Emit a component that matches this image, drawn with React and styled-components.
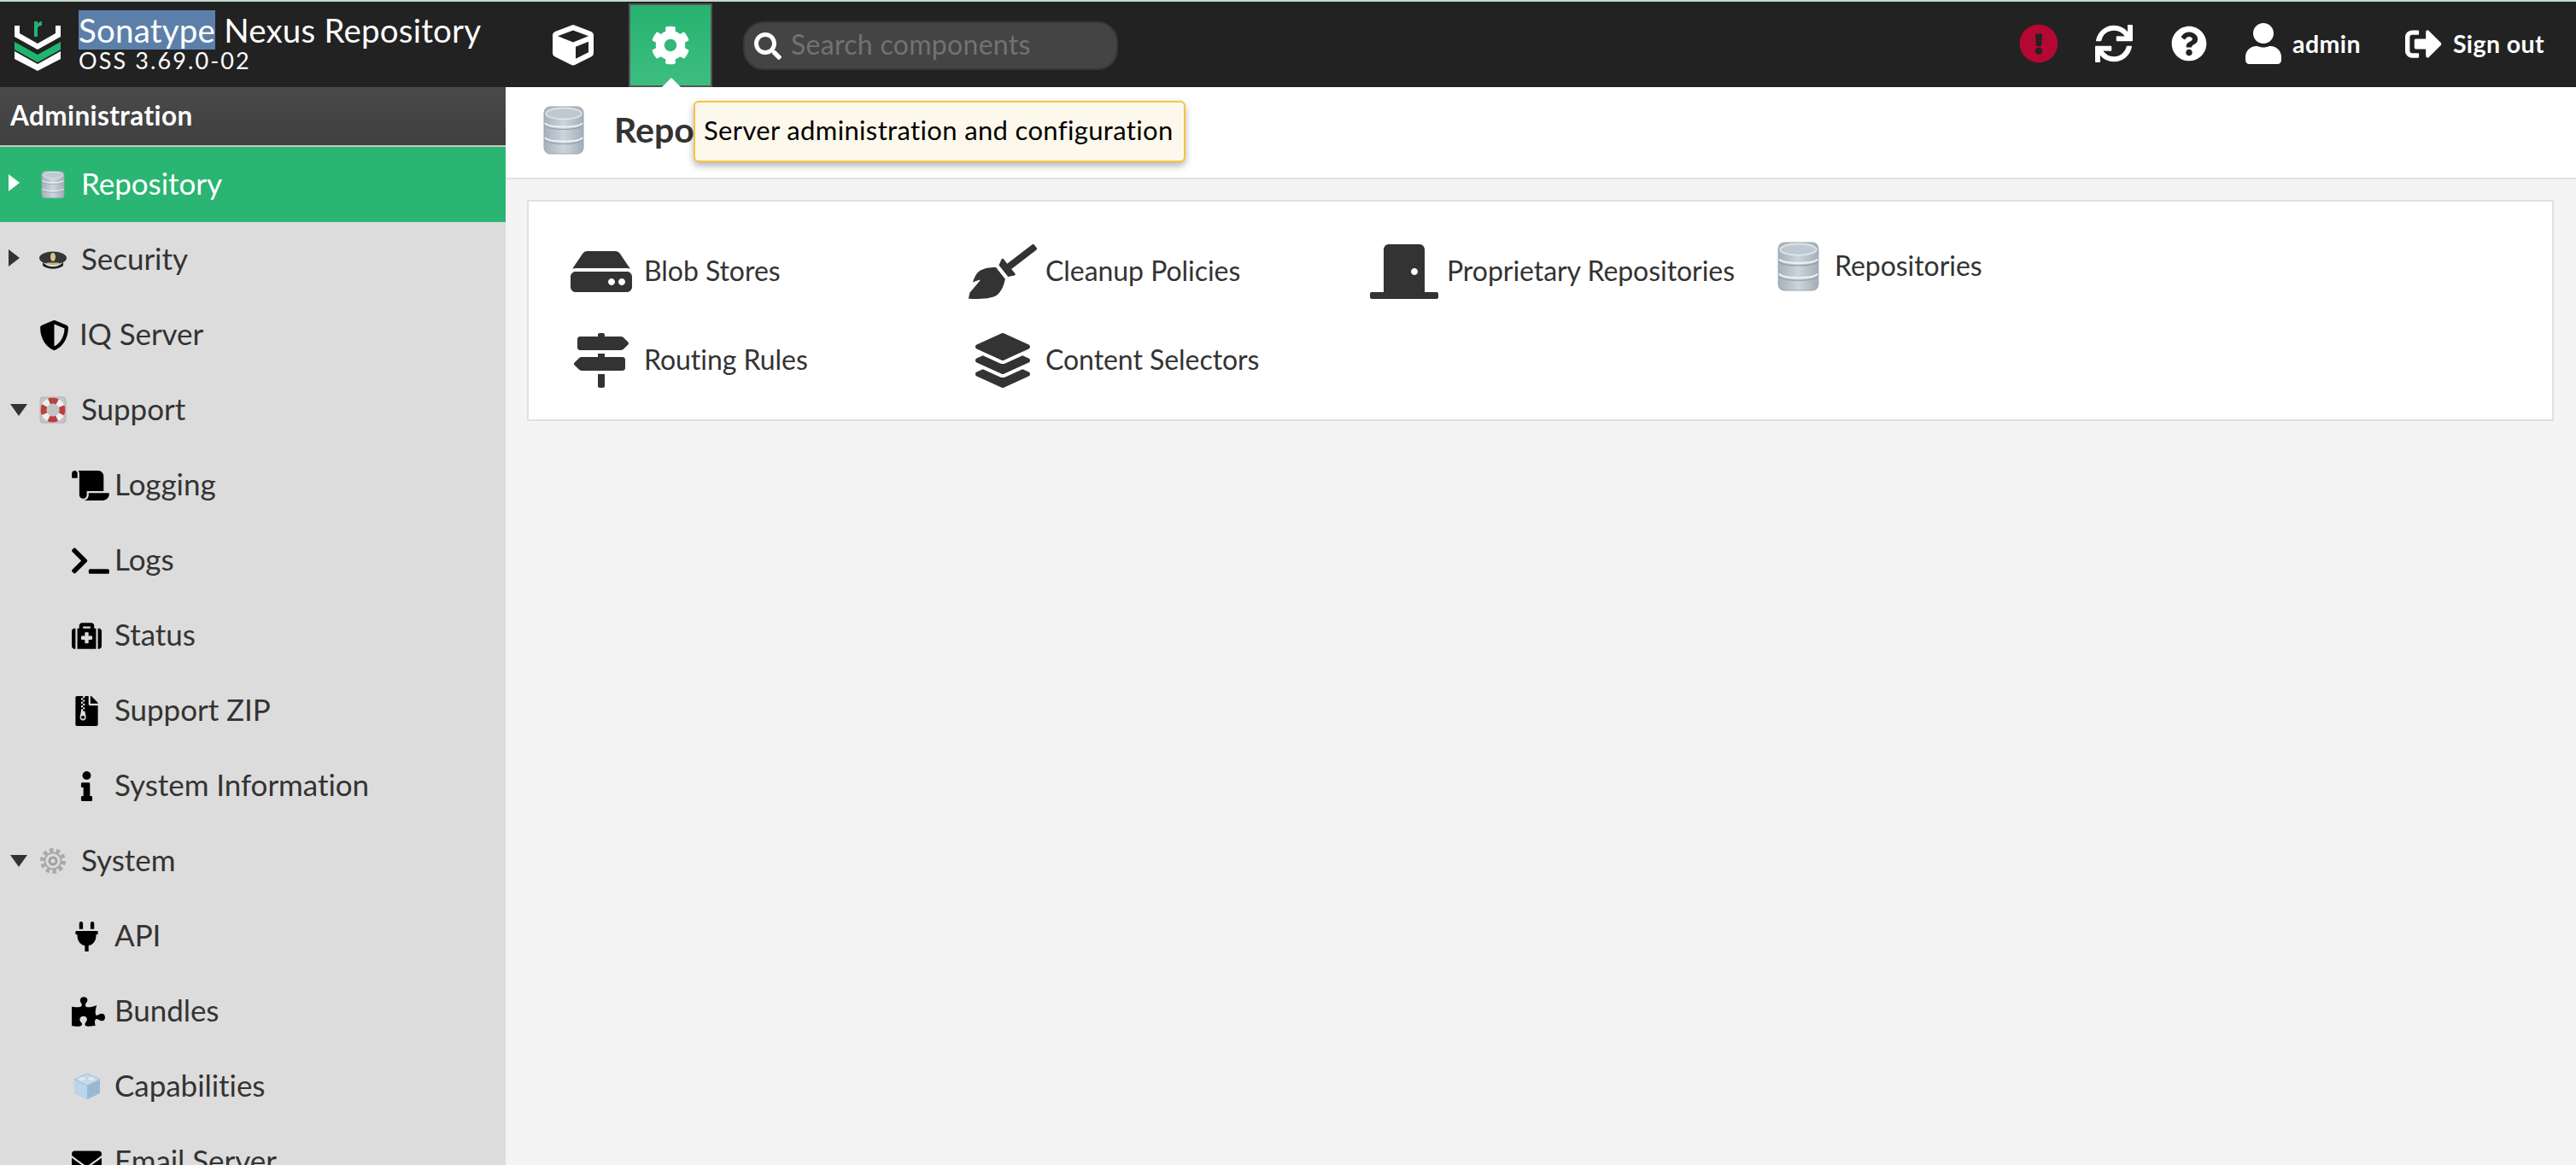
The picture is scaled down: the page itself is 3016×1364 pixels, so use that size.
import styled, { createGlobalStyle } from "styled-components";
import {
  FaBroom,
  FaCog,
  FaCube,
  FaDoorClosed,
  FaEnvelope,
  FaExclamationCircle,
  FaFileArchive,
  FaHdd,
  FaInfo,
  FaLayerGroup,
  FaMapSigns,
  FaMedkit,
  FaPlug,
  FaPuzzlePiece,
  FaQuestionCircle,
  FaScroll,
  FaSearch,
  FaShieldAlt,
  FaSignOutAlt,
  FaSync,
  FaTerminal,
  FaUser,
} from "react-icons/fa";

const GlobalStyle = createGlobalStyle`
  html, body {
    margin: 0;
    height: 100%;
    overflow: hidden;
    font-family: Lato, "Open Sans", sans-serif;
  }
  * {
    box-sizing: border-box;
  }
`;

const LogoMark = styled.svg`
  flex: none;
  margin-top: 4px;
`;

const Logo = () => (
  <LogoMark width="54" height="58" viewBox="0 0 54 58">
    <path fill="#fff" d="M0 5h6v9l21 12 21-12V5h6v13L27 33 0 18z" />
    <path fill="#1fb56f" d="M0 24l27 15 27-15v9L27 48 0 33z" />
    <path fill="#fff" d="M0 35l27 15 27-15v9L27 58 0 44z" />
    <path fill="#1fb56f" d="M23 0h4v3c1-2 3-3 5-3v5c-3 0-5 1-5 4v9h-4z" />
  </LogoMark>
);

const DbIcon = ({ width, height }) => (
  <svg width={width} height={height} viewBox="0 0 48 58">
    <defs>
      <linearGradient id="dbFill" x1="0" x2="1" y1="0" y2="0">
        <stop offset="0" stopColor="#a4b0bb" />
        <stop offset="0.5" stopColor="#ccd5dc" />
        <stop offset="1" stopColor="#a2aeb9" />
      </linearGradient>
    </defs>
    <rect x="1" y="1" width="46" height="55" rx="7" fill="url(#dbFill)" stroke="#9aa5ae" />
    <ellipse cx="24" cy="9" rx="21" ry="6.5" fill="#bfc9d2" stroke="#e4eaee" strokeWidth="1.5" />
    <path d="M2 20c4 6 40 6 44 0M2 37c4 6 40 6 44 0" fill="none" stroke="#eef2f5" strokeWidth="2" />
    <path d="M2 23c4 6 40 6 44 0M2 40c4 6 40 6 44 0" fill="none" stroke="#8f9ba6" strokeWidth="1" />
  </svg>
);

const CapIcon = () => (
  <svg width="32" height="24" viewBox="0 0 32 24">
    <ellipse cx="16" cy="10" rx="16" ry="7.5" fill="#35363a" />
    <path d="M4 15c6 7 18 7 24 0v4c-6 5-18 5-24 0z" fill="#1f2022" />
    <ellipse cx="16" cy="9" rx="3" ry="5" fill="#d8c58e" />
    <rect x="9" y="15.5" width="14" height="2" fill="#cdb673" />
  </svg>
);

const RingIcon = () => (
  <svg width="32" height="32" viewBox="0 0 32 32">
    <rect x="1" y="1" width="30" height="30" rx="3" fill="#c4c4c4" stroke="#b2b2b2" />
    <circle cx="16" cy="16" r="11" fill="none" stroke="#eee" strokeWidth="7" />
    <circle
      cx="16"
      cy="16"
      r="11"
      fill="none"
      stroke="#b8423e"
      strokeWidth="7"
      strokeDasharray="10 7.3"
      strokeDashoffset="5"
    />
  </svg>
);

const GearIcon = () => (
  <svg width="32" height="32" viewBox="0 0 32 32">
    <circle
      cx="16"
      cy="16"
      r="12.5"
      fill="none"
      stroke="#a9a9a9"
      strokeWidth="5"
      strokeDasharray="4.4 3.4"
    />
    <circle cx="16" cy="16" r="9.5" fill="none" stroke="#a9a9a9" strokeWidth="2" />
    <circle cx="16" cy="16" r="4" fill="none" stroke="#a0a0a0" strokeWidth="3" />
  </svg>
);

const BrickIcon = () => (
  <svg width="32" height="32" viewBox="0 0 32 32">
    <path d="M16 1l15 7v16l-15 7-15-7V8z" fill="#a9c6de" />
    <path d="M1 8l15 7 15-7v16l-15 7-15-7z" fill="#bcd5e8" />
    <path d="M16 15v16l15-7V8z" fill="#99b9d3" />
    <path d="M16 1l15 7-15 7-15-7z" fill="#c3d9ea" stroke="#a3c0d8" strokeWidth="1" />
    <ellipse cx="10" cy="7" rx="4" ry="2" fill="#d9e8f3" />
    <ellipse cx="21" cy="7" rx="4" ry="2" fill="#d9e8f3" />
  </svg>
);

const Page = styled.div`
  height: 1364px;
  display: flex;
  flex-direction: column;
  position: relative;
  overflow: hidden;
`;

const Header = styled.header`
  flex: none;
  height: 102px;
  display: flex;
  align-items: center;
  background: #222;
  border-top: 2px solid #c6d9d3;
  color: #fff;
`;

const Brand = styled.div`
  width: 622px;
  height: 100%;
  padding-left: 17px;
  display: flex;
  align-items: center;
  gap: 21px;
`;

const BrandText = styled.div`
  display: flex;
  flex-direction: column;
  margin-bottom: 8px;
`;

const BrandTitle = styled.div`
  font-size: 38.5px;
  line-height: 46px;
  letter-spacing: 0.2px;
  white-space: nowrap;
`;

const Selected = styled.span`
  background: #5b7fa8;
`;

const BrandVersion = styled.div`
  font-size: 27px;
  line-height: 26px;
  letter-spacing: 2.1px;
`;

const NavButton = styled.div`
  position: relative;
  width: 98px;
  height: 98px;
  display: flex;
  align-items: center;
  justify-content: center;
  font-size: ${(p) => (p.$active ? "46px" : "48px")};
  background: ${(p) =>
    p.$active ? "linear-gradient(#27b26f, #3dbe81)" : "transparent"};
  border: 2px solid ${(p) => (p.$active ? "#555" : "transparent")};
  margin-top: 2px;
  margin-right: ${(p) => (p.$active ? "0" : "16px")};

  ${(p) =>
    p.$active &&
    `
    &::after {
      content: "";
      position: absolute;
      left: 37px;
      bottom: -2px;
      border: 11px solid transparent;
      border-top: 0;
      border-bottom-color: #fff;
    }
  `}
`;

const SearchBox = styled.div`
  width: 439px;
  height: 57px;
  margin-left: 36px;
  margin-top: 3px;
  padding-left: 11px;
  display: flex;
  align-items: center;
  gap: 11px;
  font-size: 32px;
  background: #444;
  border: 2px solid #383838;
  border-radius: 24px;
`;

const Placeholder = styled.span`
  font-size: 32px;
  margin-bottom: 5px;
  letter-spacing: 0.3px;
  color: #727272;
`;

const Actions = styled.div`
  margin-left: auto;
  display: flex;
  align-items: center;
  padding: 0 37px 2px 0;
`;

const ActionIcon = styled.div`
  width: 88px;
  display: flex;
  justify-content: center;
  font-size: ${(p) => p.$size || 44}px;
  color: ${(p) => p.$color || "#fff"};
`;

const ActionLabel = styled.div`
  display: flex;
  align-items: center;
  gap: ${(p) => p.$gap}px;
  margin-left: ${(p) => p.$offset}px;
  font-weight: 700;
  letter-spacing: 0.4px;

  svg {
    font-size: ${(p) => p.$icon}px;
  }

  span {
    font-size: 28.5px;
  }
`;

const Body = styled.div`
  flex: 1;
  min-height: 0;
  display: flex;
`;

const Sidebar = styled.aside`
  flex: none;
  width: 592px;
  overflow: hidden;
  background: #dcdcdc;
`;

const SidebarTitle = styled.div`
  height: 70px;
  padding: 0 0 2px 12px;
  display: flex;
  align-items: center;
  font-size: 31.5px;
  letter-spacing: 0.4px;
  font-weight: 700;
  color: #fff;
  background: linear-gradient(#4a4a4a, #3f3f3f);
  border-bottom: 2px solid #c8c8c8;
`;

const Row = styled.div`
  height: 88px;
  display: flex;
  align-items: center;
  position: relative;
  padding-left: ${(p) => (p.$child ? "84px" : "46px")};
  font-size: 35px;
  letter-spacing: -0.05px;
  color: ${(p) => (p.$selected ? "#fff" : "#333")};
  background: ${(p) => (p.$selected ? "#2ab573" : "transparent")};
`;

const RowLabel = styled.span`
  margin-bottom: 4px;
  margin-left: ${(p) => (p.$tight ? "-2px" : "0")};
`;

const Caret = styled.span`
  position: absolute;
  ${(p) =>
    p.$open
      ? `
    left: 12px;
    top: 37px;
    border-left: 10px solid transparent;
    border-right: 10px solid transparent;
    border-top: 14px solid #333;
  `
      : `
    left: 10px;
    top: 32px;
    border-top: 10px solid transparent;
    border-bottom: 10px solid transparent;
    border-left: 13px solid ${p.$light ? "#fff" : "#333"};
  `}
`;

const RowIcon = styled.span`
  flex: none;
  width: ${(p) => (p.$child ? "35px" : "32px")};
  margin-right: ${(p) => (p.$child ? "15px" : "17px")};
  display: flex;
  justify-content: safe center;
  color: #000;

  svg {
    display: block;
    flex: none;
    ${(p) =>
      p.$child && !p.$raw ? `height: 35px; width: ${p.$iconWidth || 35}px;` : ""}
  }
`;

const Main = styled.main`
  flex: 1;
  min-width: 0;
  background: #f4f4f4;
`;

const PageTitleBar = styled.div`
  height: 108px;
  padding: 0 0 4px 44px;
  display: flex;
  align-items: center;
  gap: 35px;
  background: #fff;
  border-bottom: 2px solid #e0e0e0;
`;

const PageTitle = styled.h1`
  margin: 0 0 3px;
  font-size: 41px;
  font-weight: 700;
  color: #333;
`;

const Card = styled.section`
  margin: 24px 26px 0 25px;
  height: 259px;
  padding: 50px 0 0 45px;
  display: grid;
  grid-template-columns: 470px 470px 477px auto;
  grid-template-rows: 64px 64px;
  row-gap: 40px;
  background: #fff;
  border: 2px solid #e0e0e0;
`;

const Tile = styled.div`
  display: flex;
  align-items: center;
  align-self: start;
  gap: ${(p) => (p.$plain ? "18px" : "10px")};
  margin-top: ${(p) => (p.$plain ? "-3px" : "0")};
  font-size: 32px;
  letter-spacing: -0.05px;
  white-space: nowrap;
  color: #333;
`;

const TileLabel = styled.span`
  margin-bottom: 4px;
`;

const TileIcon = styled.span`
  width: ${(p) => (p.$plain ? "49px" : "80px")};
  height: ${(p) => (p.$plain ? "59px" : "64px")};
  display: flex;
  justify-content: center;
  align-items: center;

  svg {
    height: ${(p) => (p.$plain ? "59px" : "64px")};
    width: ${(p) => (p.$plain ? "49px" : "80px")};
  }
`;

const Tooltip = styled.div`
  position: absolute;
  left: 812px;
  top: 118px;
  width: 576px;
  height: 72px;
  display: flex;
  align-items: center;
  padding: 0 0 4px 10px;
  font-size: 31px;
  letter-spacing: 0.35px;
  color: #000;
  white-space: nowrap;
  background: #fdf8ec;
  border: 2px solid #f6c343;
  border-radius: 6px;
  box-shadow: 0 4px 8px rgba(0, 0, 0, 0.3);
`;

const menu = [
  { label: "Repository", icon: <DbIcon width={30} height={33} />, caret: "closed", selected: true },
  { label: "Security", icon: <CapIcon />, caret: "closed" },
  { label: "IQ Server", icon: <FaShieldAlt size={35} />, tight: true },
  { label: "Support", icon: <RingIcon />, caret: "open" },
  { label: "Logging", icon: <FaScroll />, child: true, iconWidth: 44 },
  { label: "Logs", icon: <FaTerminal />, child: true, iconWidth: 44 },
  { label: "Status", icon: <FaMedkit />, child: true },
  { label: "Support ZIP", icon: <FaFileArchive />, child: true },
  { label: "System Information", icon: <FaInfo />, child: true },
  { label: "System", icon: <GearIcon />, caret: "open" },
  { label: "API", icon: <FaPlug />, child: true },
  { label: "Bundles", icon: <FaPuzzlePiece />, child: true, iconWidth: 39 },
  { label: "Capabilities", icon: <BrickIcon />, child: true, raw: true },
  { label: "Email Server", icon: <FaEnvelope />, child: true },
];

const tiles = [
  { label: "Blob Stores", icon: <FaHdd color="#333" /> },
  { label: "Cleanup Policies", icon: <FaBroom color="#333" /> },
  { label: "Proprietary Repositories", icon: <FaDoorClosed color="#333" /> },
  { label: "Repositories", icon: <DbIcon width={49} height={59} />, plain: true },
  { label: "Routing Rules", icon: <FaMapSigns color="#333" /> },
  { label: "Content Selectors", icon: <FaLayerGroup color="#333" /> },
];

const App = () => {
  return (
    <Page>
      <GlobalStyle />
      <Header>
        <Brand>
          <Logo />
          <BrandText>
            <BrandTitle>
              <Selected>Sonatype</Selected> Nexus Repository
            </BrandTitle>
            <BrandVersion>OSS 3.69.0-02</BrandVersion>
          </BrandText>
        </Brand>
        <NavButton>
          <FaCube />
        </NavButton>
        <NavButton $active>
          <FaCog />
        </NavButton>
        <SearchBox>
          <FaSearch />
          <Placeholder>Search components</Placeholder>
        </SearchBox>
        <Actions>
          <ActionIcon $size={46} $color="#b50733">
            <FaExclamationCircle />
          </ActionIcon>
          <ActionIcon>
            <FaSync />
          </ActionIcon>
          <ActionIcon $size={42}>
            <FaQuestionCircle />
          </ActionIcon>
          <ActionLabel $gap={10} $offset={19} $icon={48}>
            <FaUser />
            <span>admin</span>
          </ActionLabel>
          <ActionLabel $gap={13} $offset={52} $icon={43}>
            <FaSignOutAlt />
            <span>Sign out</span>
          </ActionLabel>
        </Actions>
      </Header>
      <Body>
        <Sidebar>
          <SidebarTitle>Administration</SidebarTitle>
          {menu.map((item) => (
            <Row key={item.label} $child={item.child} $selected={item.selected}>
              {item.caret && (
                <Caret $open={item.caret === "open"} $light={item.selected} />
              )}
              <RowIcon $child={item.child} $raw={item.raw} $iconWidth={item.iconWidth}>
                {item.icon}
              </RowIcon>
              <RowLabel $tight={item.tight}>{item.label}</RowLabel>
            </Row>
          ))}
        </Sidebar>
        <Main>
          <PageTitleBar>
            <DbIcon width={48} height={58} />
            <PageTitle>Repositories</PageTitle>
          </PageTitleBar>
          <Card>
            {tiles.map((tile) => (
              <Tile key={tile.label} $plain={tile.plain}>
                <TileIcon $plain={tile.plain}>{tile.icon}</TileIcon>
                <TileLabel>{tile.label}</TileLabel>
              </Tile>
            ))}
          </Card>
        </Main>
      </Body>
      <Tooltip>Server administration and configuration</Tooltip>
    </Page>
  );
};

export default App;
